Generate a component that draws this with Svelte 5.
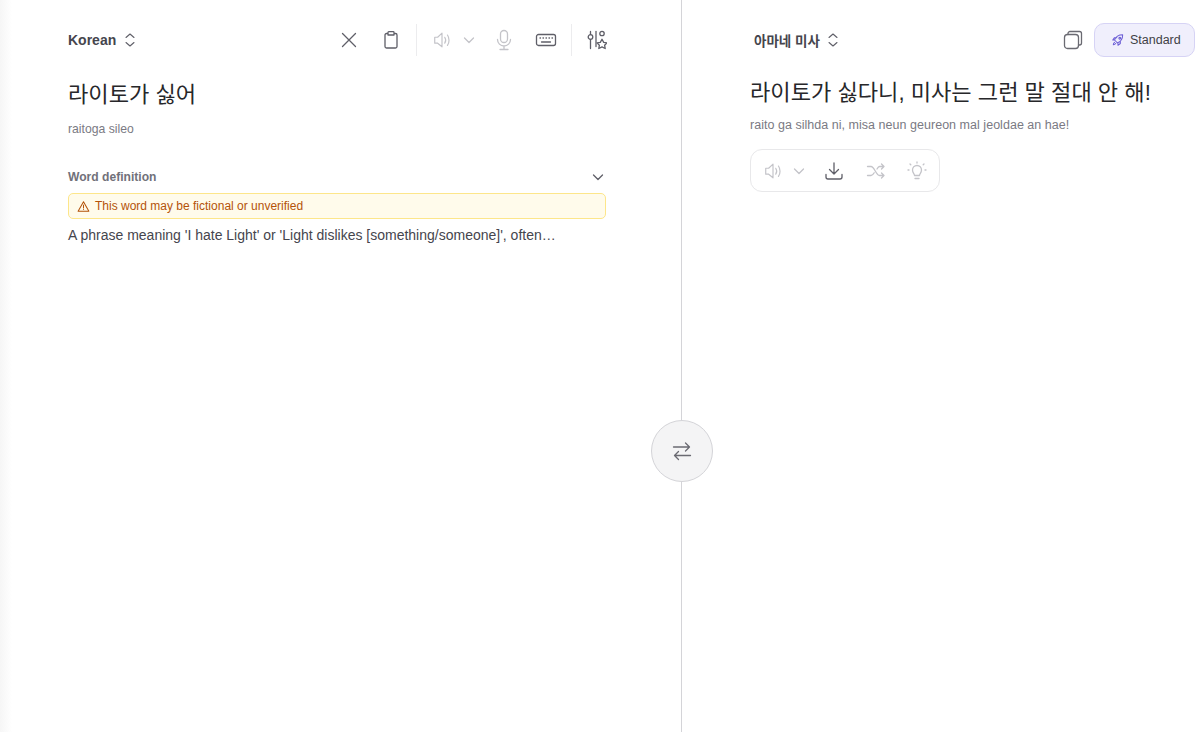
<script lang="ts">
    const speaker = "M2 8v6.500h3.200L10 18.500V3.500L5.200 8H2z";
    const waves = "M13 8c1.200 1.800 1.200 4.700 0 6.500M16 5.500c2.300 3.200 2.300 8.300 0 11.500";
</script>

<style>
    :global(body) {
        margin: 0;
        background: #fff;
        font-family: "Liberation Sans", "Noto Sans CJK KR", sans-serif;
        color: #3f3f46;
    }

    .page {
        position: relative;
        display: flex;
        height: 732px;
        overflow: hidden;
    }

    .source {
        width: 682px;
        flex: none;
        box-sizing: border-box;
        padding: 23px 75px 0 68px;
        border-right: 1px solid #d4d4d8;
        background: linear-gradient(90deg, #f6f6f6 0, #fff 12px);
    }

    .target {
        flex: 1;
        min-width: 0;
        padding: 23px 4px 0 68px;
    }

    .toolbar {
        display: flex;
        align-items: center;
        height: 33px;
    }

    .lang {
        display: flex;
        align-items: center;
        gap: 7px;
        font-size: 14px;
        font-weight: bold;
        color: #45454d;
    }

    .target .lang {
        margin-left: 4px;
        font-size: 13.5px;
        gap: 6px;
    }

    .spacer {
        flex: 1;
    }

    .icon {
        display: block;
        fill: none;
        stroke: currentColor;
        stroke-width: 1.3;
        stroke-linecap: round;
        stroke-linejoin: round;
    }

    .tools {
        display: flex;
        align-items: center;
        color: #5f5f68;
    }

    .faint {
        color: #c4c4c9;
    }

    .sep {
        width: 1px;
        height: 32px;
        background: #ececee;
    }

    .heading {
        margin: 22px 0 0;
        font-size: 22.1px;
        line-height: 34px;
        font-weight: normal;
        color: #27272a;
    }

    .target .heading {
        margin-top: 20px;
    }

    .roman {
        margin: 8px 0 0;
        font-size: 12.2px;
        line-height: 18px;
        color: #7a7a83;
    }

    .target .roman {
        margin-top: 6px;
        font-size: 12.5px;
        letter-spacing: 0.03px;
    }

    .def-head {
        display: flex;
        justify-content: space-between;
        align-items: center;
        margin-top: 29px;
        height: 20px;
        font-size: 12.1px;
        font-weight: bold;
        color: #71717a;
    }

    .warning {
        display: flex;
        align-items: center;
        gap: 5px;
        box-sizing: border-box;
        height: 26px;
        margin-top: 6px;
        padding: 0 8px;
        border: 1px solid #fde68a;
        border-radius: 5px;
        background: #fffbeb;
        color: #b45309;
        font-size: 12px;
    }

    .definition {
        margin: 6px 0 0;
        font-size: 14px;
        line-height: 20px;
        color: #45454d;
    }

    .actions {
        display: inline-flex;
        align-items: center;
        box-sizing: border-box;
        height: 43px;
        width: 190px;
        margin-top: 15px;
        padding-left: 12px;
        border: 1px solid #e8e8ea;
        border-radius: 12px;
        color: #c4c4c9;
    }

    .model {
        display: flex;
        align-items: center;
        gap: 5px;
        box-sizing: border-box;
        width: 101px;
        height: 34px;
        margin-left: 11px;
        padding-left: 16px;
        border: 1px solid #d6d3f5;
        border-radius: 10px;
        background: #f0effc;
        font-size: 12.5px;
        color: #3f3f46;
    }

    .rocket {
        color: #6d5fd6;
    }

    .swap {
        position: absolute;
        left: 651px;
        top: 420px;
        width: 62px;
        height: 62px;
        box-sizing: border-box;
        display: flex;
        align-items: center;
        justify-content: center;
        border: 1px solid #d4d4d8;
        border-radius: 50%;
        background: #f4f4f5;
        color: #6a6a72;
    }
</style>

<div class="page">
    <section class="source">
        <div class="toolbar">
            <div class="lang">
                Korean
                <svg class="icon" width="14" height="16" viewBox="0 0 14 16" style="stroke-width:1.100;color:#5f5f68"><path d="M3 5.500l4-3.500 4 3.500M3 10.500L7 14l4-3.500" /></svg>
            </div>
            <div class="spacer"></div>
            <div class="tools">
                <svg class="icon" width="20" height="20" viewBox="0 0 20 20" style="margin-right:22px"><path d="M3.500 3.500l13 13M16.500 3.500l-13 13" /></svg>
                <svg class="icon" width="20" height="20" viewBox="0 0 20 20" style="margin-right:15px"><path d="M7 3.500H5.500A1.500 1.500 0 0 0 4 5v11.500A1.500 1.500 0 0 0 5.500 18h9a1.500 1.500 0 0 0 1.500-1.500V5a1.500 1.500 0 0 0-1.500-1.500H13M7 2.500c0-.5.400-.800.800-.800h4.400c.400 0 .800.300.800.800v2.500H7z" /></svg>
                <div class="sep" style="margin-right:15px"></div>
                <svg class="icon faint" width="20" height="20" viewBox="0 0 20 22" style="margin-right:11px"><path d={speaker} /><path d={waves} /></svg>
                <svg class="icon faint" width="12" height="12" viewBox="0 0 12 12" style="margin-right:19px"><path d="M1.500 4l4.500 4.500L10.500 4" /></svg>
                <svg class="icon faint" width="20" height="22" viewBox="0 0 20 22" style="margin-right:21px"><rect x="6.500" y="1.500" width="7" height="12" rx="3.500" /><path d="M3.500 10.500a6.500 6.500 0 0 0 13 0M10 17v3.500M6 20.500h8" /></svg>
                <svg class="icon" width="22" height="16" viewBox="0 0 22 16" style="margin-right:14px"><rect x="1.500" y="2.500" width="19" height="11" rx="2" /><path d="M5 6h.5M8 6h.5M11 6h.5M14 6h.5M17 6h.5M6.500 10h9" /></svg>
                <div class="sep" style="margin-right:15px"></div>
                <svg class="icon" width="20" height="20" viewBox="0 0 20 20" style="margin-right:-1px"><path d="M3.500 1.500v3M3.500 9.500v9" /><circle cx="3.500" cy="7" r="2.300" /><path d="M9 1.500v15" /><circle cx="15" cy="3.500" r="2.200" /><path d="M15 9.200l1.700 3.200 3.300.5-2.400 2.300.6 3.300-3.200-1.600-3.200 1.600.6-3.300-2.400-2.300 3.300-.5z" /></svg>
            </div>
        </div>

        <h1 class="heading">라이토가 싫어</h1>
        <p class="roman">raitoga sileo</p>

        <div class="def-head">
            Word definition
            <svg class="icon" width="14" height="14" viewBox="0 0 14 14" style="margin-right:1px;color:#5f5f68"><path d="M2.500 5l4.500 4.500L11.500 5" /></svg>
        </div>
        <div class="warning">
            <svg class="icon" width="13" height="13" viewBox="0 0 14 14" style="stroke-width:1.100"><path d="M7 1.800l5.800 10.200H1.200zM7 5.500v3M7 10.200v.1" /></svg>
            This word may be fictional or unverified
        </div>
        <p class="definition">A phrase meaning 'I hate Light' or 'Light dislikes [something/someone]', often…</p>
    </section>

    <section class="target">
        <div class="toolbar">
            <div class="lang">
                아마네 미사
                <svg class="icon" width="14" height="16" viewBox="0 0 14 16" style="stroke-width:1.100;color:#5f5f68"><path d="M3 5.500l4-3.500 4 3.500M3 10.500L7 14l4-3.500" /></svg>
            </div>
            <div class="spacer"></div>
            <svg class="icon" width="20" height="20" viewBox="0 0 20 20" style="color:#6a6a72"><rect x="1.500" y="4.500" width="14" height="14" rx="3" /><path d="M5 4.500V3.500a2 2 0 0 1 2-2h9.500a2 2 0 0 1 2 2V13a2 2 0 0 1-2 2h-1" /></svg>
            <div class="model">
                <svg class="icon rocket" width="14" height="14" viewBox="0 0 24 24" style="stroke-width:1.800"><path d="M9 15l-3-3c1.500-4 5-9 14-9 0 9-5 12.500-9 14zM6 12H3l3-4h4M12 18v3l4-3v-4M6 16c-1.500 1-2 3-2 4 1 0 3-.5 4-2" /><circle cx="15" cy="9" r="1.500" /></svg>
                Standard
            </div>
        </div>

        <h1 class="heading">라이토가 싫다니, 미사는 그런 말 절대 안 해!</h1>
        <p class="roman">raito ga silhda ni, misa neun geureon mal jeoldae an hae!</p>

        <div class="actions">
            <svg class="icon" width="20" height="20" viewBox="0 0 20 22" style="margin-right:10px"><path d={speaker} /><path d={waves} /></svg>
            <svg class="icon" width="12" height="12" viewBox="0 0 12 12" style="margin-right:19px"><path d="M1.500 4l4.500 4.500L10.500 4" /></svg>
            <svg class="icon" width="20" height="20" viewBox="0 0 20 20" style="margin-right:22px;color:#5f5f68"><path d="M10 2v11M5.500 8.500L10 13l4.500-4.500M2 13.500v2.500a2 2 0 0 0 2 2h12a2 2 0 0 0 2-2v-2.500" /></svg>
            <svg class="icon" width="20" height="20" viewBox="0 0 20 20" style="margin-right:21px"><path d="M1.500 5.500H5c3.500 0 5 9 8.500 9H18M1.500 14.500H5c1.300 0 2.300-1.200 3.200-2.800M11 8c.8-1.400 1.500-2.500 2.500-2.500H18M15.500 3l2.500 2.500L15.500 8M15.500 12l2.500 2.500-2.500 2.500" /></svg>
            <svg class="icon" width="20" height="20" viewBox="0 0 20 20"><path d="M7.500 14.500c0-1.500-2-2.500-2-5.500a4.500 4.500 0 0 1 9 0c0 3-2 4-2 5.500zM8 17.500h4M10 1v1M3 3l.8.800M17 3l-.8.800M1 9h1M18 9h1" /></svg>
        </div>
    </section>

    <div class="swap">
        <svg class="icon" width="22" height="22" viewBox="0 0 22 22"><path d="M2.500 7h16M14.500 3l4 4-4 4M19.500 15.500h-16M7.500 11.500l-4 4 4 4" /></svg>
    </div>
</div>
